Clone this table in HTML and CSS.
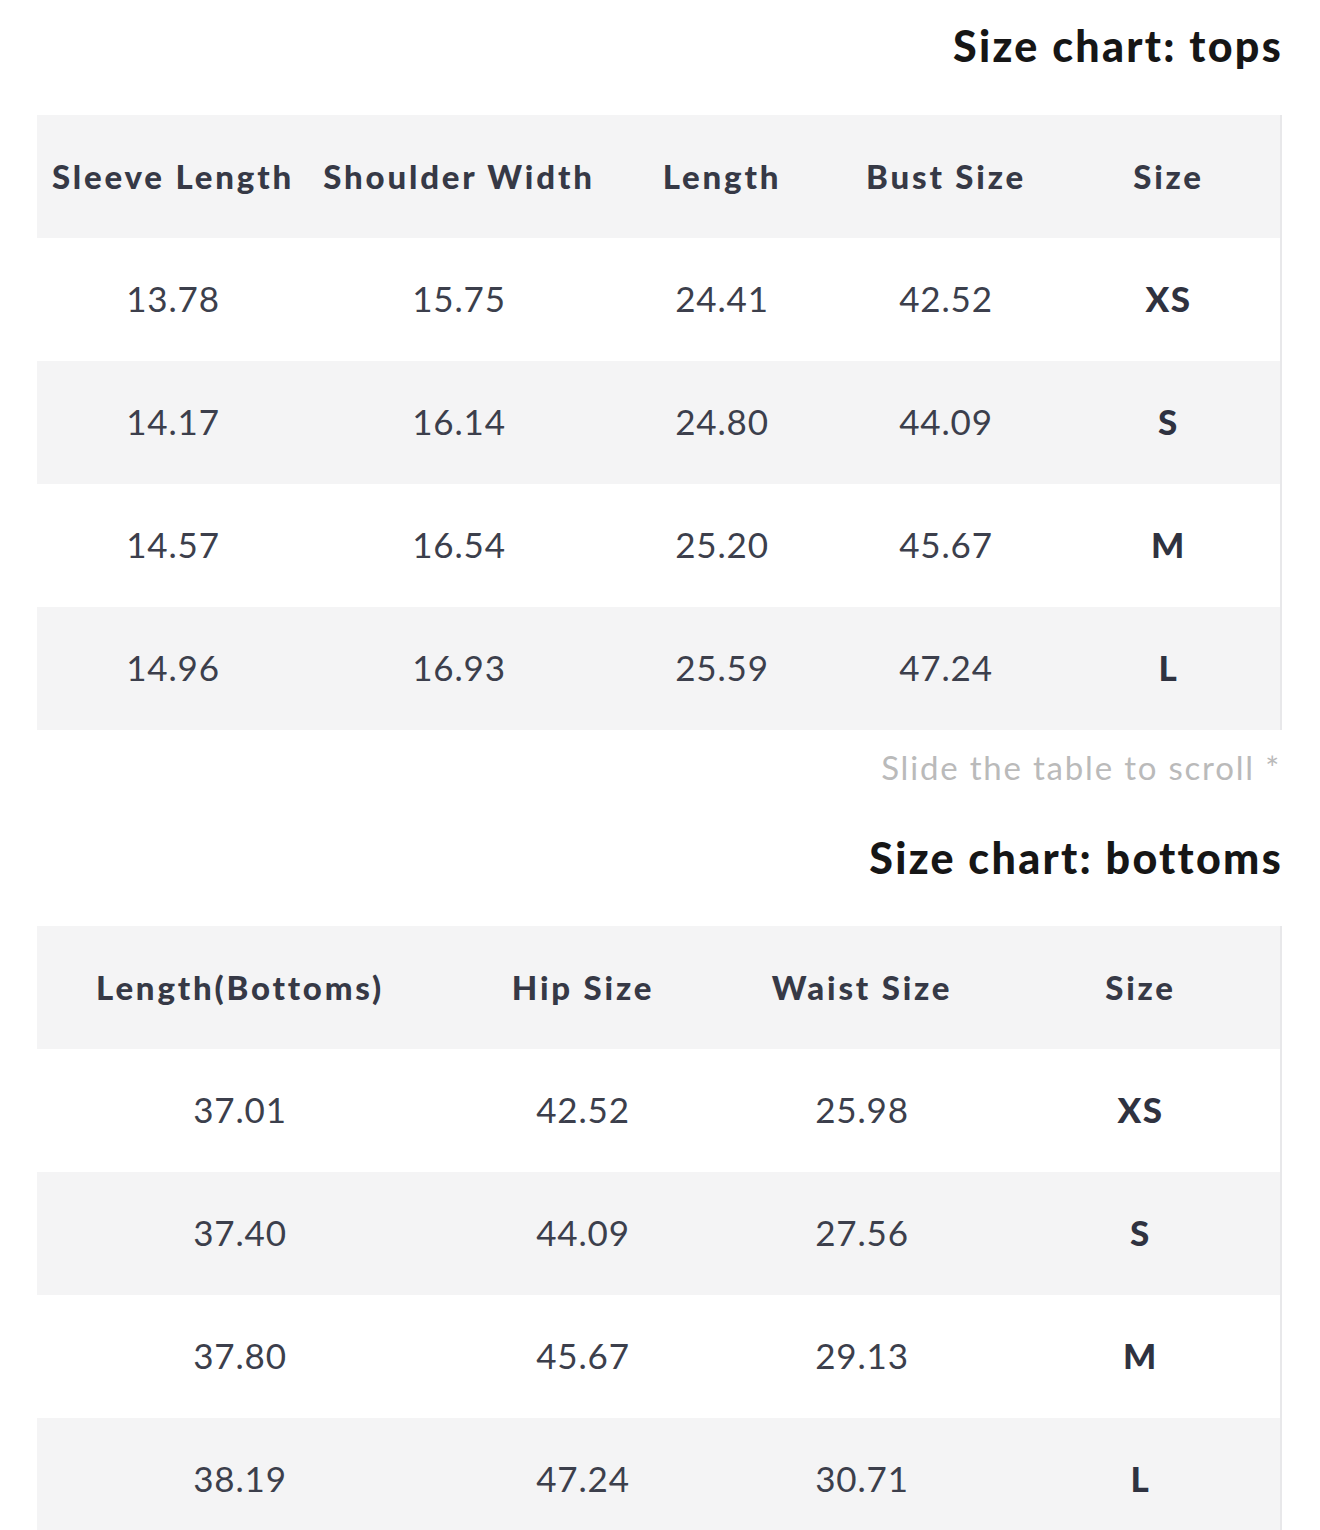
FILE: index.html
```html
<!DOCTYPE html>
<html lang="en">
<head>
<meta charset="utf-8">
<title>Size chart</title>
<link rel="stylesheet" href="styles.css">
</head>
<body>
<main class="page">
  <h2 class="chart-title chart-title--first">Size chart: tops</h2>
  <div class="table-wrap">
    <table class="size-table">
      <colgroup>
        <col class="c-272"><col class="c-300"><col class="c-226"><col class="c-222"><col class="c-224">
      </colgroup>
      <thead>
        <tr><th>Sleeve Length</th><th>Shoulder Width</th><th>Length</th><th>Bust Size</th><th>Size</th></tr>
      </thead>
      <tbody>
        <tr><td>13.78</td><td>15.75</td><td>24.41</td><td>42.52</td><td class="size">XS</td></tr>
        <tr><td>14.17</td><td>16.14</td><td>24.80</td><td>44.09</td><td class="size">S</td></tr>
        <tr><td>14.57</td><td>16.54</td><td>25.20</td><td>45.67</td><td class="size">M</td></tr>
        <tr><td>14.96</td><td>16.93</td><td>25.59</td><td>47.24</td><td class="size">L</td></tr>
      </tbody>
    </table>
  </div>
  <p class="note">Slide the table to scroll *</p>

  <h2 class="chart-title chart-title--second">Size chart: bottoms</h2>
  <div class="table-wrap">
    <table class="size-table">
      <colgroup>
        <col class="c-406"><col class="c-280"><col class="c-278"><col class="c-280">
      </colgroup>
      <thead>
        <tr><th>Length(Bottoms)</th><th>Hip Size</th><th>Waist Size</th><th>Size</th></tr>
      </thead>
      <tbody>
        <tr><td>37.01</td><td>42.52</td><td>25.98</td><td class="size">XS</td></tr>
        <tr><td>37.40</td><td>44.09</td><td>27.56</td><td class="size">S</td></tr>
        <tr><td>37.80</td><td>45.67</td><td>29.13</td><td class="size">M</td></tr>
        <tr><td>38.19</td><td>47.24</td><td>30.71</td><td class="size">L</td></tr>
      </tbody>
    </table>
  </div>
</main>
</body>
</html>
```
FILE: styles.css
```css
html, body {
  margin: 0;
  padding: 0;
  background: #ffffff;
}

body {
  font-family: Lato, "Open Sans", "Liberation Sans", sans-serif;
  color: #3a3d4a;
}

.page {
  padding: 0 37px 0 37px;
  width: 1246px;
}

.chart-title {
  margin: 0;
  text-align: right;
  font-size: 43px;
  line-height: 60px;
  font-weight: 900;
  letter-spacing: 2.3px;
  color: #161616;
  padding-right: 0;
}

.chart-title--first {
  padding-top: 16px;
  margin-bottom: 39px;
}

.chart-title--second {
  margin-top: 41px;
  margin-bottom: 38px;
}

.table-wrap {
  width: 1246px;
  overflow: hidden;
}

.size-table {
  width: 1244px;
  border-collapse: collapse;
  table-layout: fixed;
  border-right: 2px solid #e8e8ea;
}

.c-272 { width: 272px; }
.c-300 { width: 300px; }
.c-226 { width: 226px; }
.c-222 { width: 222px; }
.c-224 { width: 224px; }
.c-406 { width: 406px; }
.c-280 { width: 280px; }
.c-278 { width: 278px; }

.size-table th,
.size-table td {
  padding: 0;
  text-align: center;
  vertical-align: middle;
  white-space: nowrap;
}

.size-table th {
  height: 121px;
  padding-bottom: 2px;
  font-size: 33px;
  font-weight: 900;
  letter-spacing: 2.8px;
  color: #363946;
}

.size-table thead tr {
  background: #f4f4f5;
}

.size-table td {
  height: 120px;
  padding-bottom: 3px;
  font-size: 35px;
  font-weight: 400;
  letter-spacing: 0.8px;
  color: #3c3f4c;
}

.size-table td.size {
  font-weight: 900;
  letter-spacing: 1.5px;
  color: #2f3240;
}

.size-table tbody tr:nth-child(even) {
  background: #f4f4f5;
}

.note {
  margin: 17px 0 0;
  text-align: right;
  font-size: 33px;
  line-height: 40px;
  font-weight: 400;
  letter-spacing: 1.8px;
  color: #bababa;
  padding-right: 2px;
}
```
